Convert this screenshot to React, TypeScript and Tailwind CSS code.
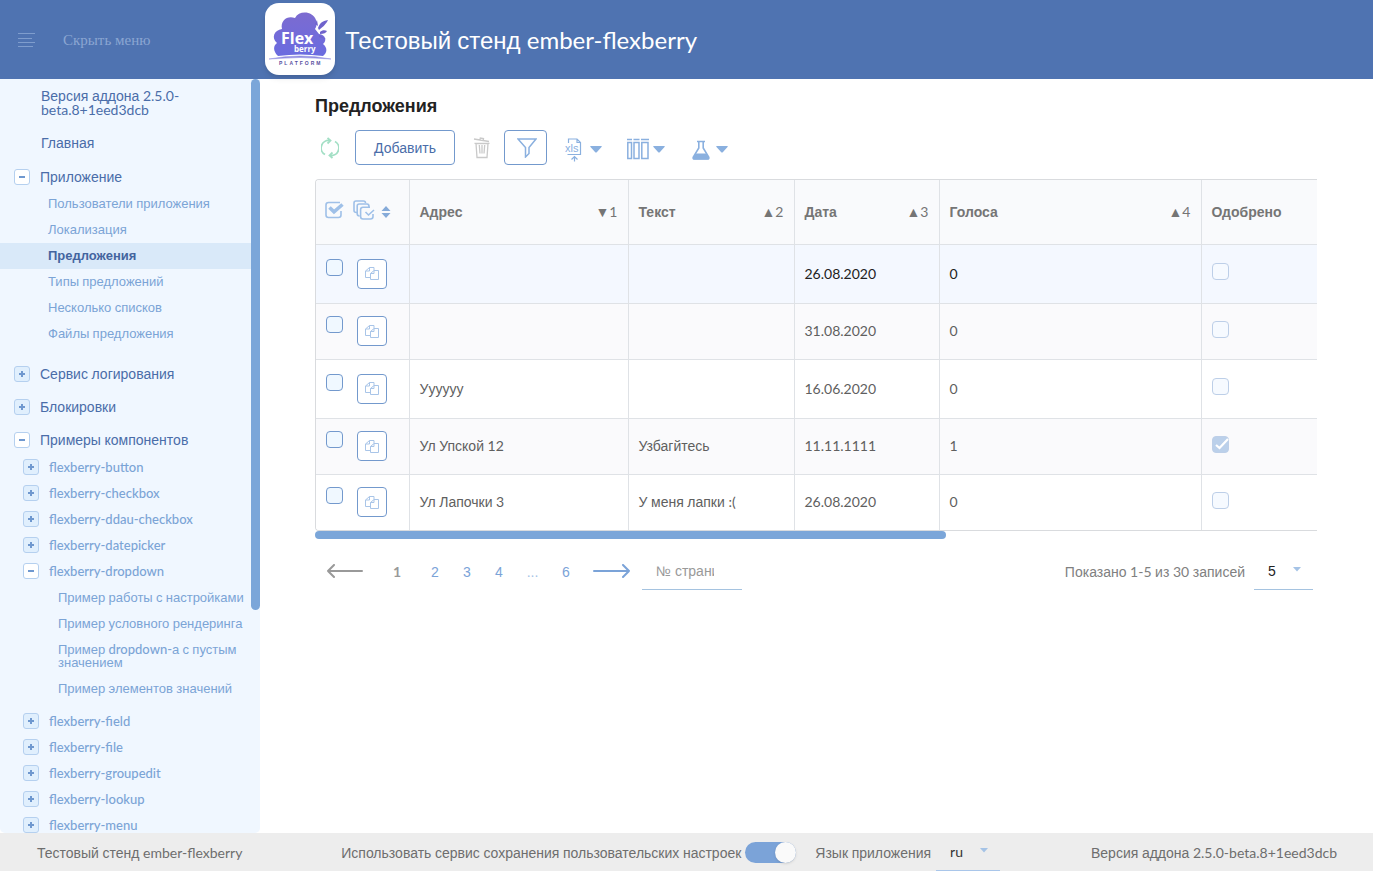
import React from 'react';

type Leaf = { label: string; active?: boolean };
type Node = { label: string; open?: boolean; children?: Leaf[] };

const appLinks: Leaf[] = [
  { label: 'Пользователи приложения' },
  { label: 'Локализация' },
  { label: 'Предложения', active: true },
  { label: 'Типы предложений' },
  { label: 'Несколько списков' },
  { label: 'Файлы предложения' },
];

const components: Node[] = [
  { label: 'flexberry-button' },
  { label: 'flexberry-checkbox' },
  { label: 'flexberry-ddau-checkbox' },
  { label: 'flexberry-datepicker' },
  {
    label: 'flexberry-dropdown',
    open: true,
    children: [
      { label: 'Пример работы с настройками' },
      { label: 'Пример условного рендеринга' },
      { label: 'Пример dropdown-а с пустым значением' },
      { label: 'Пример элементов значений' },
    ],
  },
  { label: 'flexberry-field' },
  { label: 'flexberry-file' },
  { label: 'flexberry-groupedit' },
  { label: 'flexberry-lookup' },
  { label: 'flexberry-menu' },
];

const rows = [
  { address: '', text: '', date: '26.08.2020', votes: 0, approved: false, tall: true },
  { address: '', text: '', date: '31.08.2020', votes: 0, approved: false, tall: false },
  { address: 'Уууууу', text: '', date: '16.06.2020', votes: 0, approved: false, tall: true },
  { address: 'Ул Упской 12', text: 'Узбагйтесь', date: '11.11.1111', votes: 1, approved: true, tall: false },
  { address: 'Ул Лапочки 3', text: 'У меня лапки :(', date: '26.08.2020', votes: 0, approved: false, tall: false },
];

/* Latin letters, digits and spaces use Lato; Cyrillic words use Liberation Sans. */
function T({ children }: { children: string }) {
  return (
    <>
      {children.split(/([А-Яа-яЁё№]+)/).map((part, i) =>
        i % 2 ? (
          <span key={i} className="font-['Liberation_Sans',sans-serif]">{part}</span>
        ) : (
          part
        ),
      )}
    </>
  );
}

function Expander({ open, label }: { open?: boolean; label: string }) {
  return (
    <button
      type="button"
      aria-label={label}
      aria-expanded={!!open}
      className={`flex size-4 shrink-0 items-center justify-center rounded-[3px] border border-[#b5d0ef] ${open ? 'bg-white' : 'bg-[#e0effd]'}`}
    >
      <svg viewBox="0 0 6 6" className="size-[6px]" stroke="#6f98cf" strokeWidth="2">
        <path d="M0 3H6" />
        {!open && <path d="M3 0V6" />}
      </svg>
    </button>
  );
}

function SectionTitle({ label, open }: { label: string; open?: boolean }) {
  return (
    <div className={`flex items-center gap-[10px] pl-[14px] pt-[9px] ${open ? 'pb-[6px]' : 'pb-2'}`}>
      <Expander open={open} label={label} />
      <a href="#" className="text-sm leading-4 text-[#4a6da9]"><T>{label}</T></a>
    </div>
  );
}

function Sidebar() {
  return (
    <aside className="flex w-[260px] shrink-0 overflow-hidden rounded-b-[5px] bg-[#f0f7ff]">
      <nav className="min-w-0 flex-1">
        <a href="#" className="block pb-[9px] pl-[41px] pr-16 pt-[10px] text-sm leading-[14px] text-[#4a6da9]">
          <T>Версия аддона 2.5.0-beta.8+1eed3dcb</T>
        </a>
        <a href="#" className="block py-[10px] pl-[41px] text-sm leading-[14px] text-[#4a6da9]"><T>Главная</T></a>
        <SectionTitle label="Приложение" open />
        <ul className="pb-[10px]">
          {appLinks.map((l) => (
            <li key={l.label} className={l.active ? 'bg-[#d9e9f9]' : ''}>
              <a
                href="#"
                className={`block pb-[7px] pl-12 pt-[6px] text-[13px] leading-[13px] ${l.active ? 'font-bold text-[#43649f]' : 'font-medium text-[#7ba4d6]'}`}
              >
                <T>{l.label}</T>
              </a>
            </li>
          ))}
        </ul>
        <SectionTitle label="Сервис логирования" />
        <SectionTitle label="Блокировки" />
        <SectionTitle label="Примеры компонентов" open />
        <ul>
          {components.map((c) => (
            <li key={c.label}>
              <div className="flex h-[26px] items-center gap-[10px] pl-[23px]">
                <Expander open={c.open} label={c.label} />
                <a href="#" className="text-[13px] leading-[13px] font-medium text-[#7ba4d6]">{c.label}</a>
              </div>
              {c.children && (
                <ul className="pb-[6px] pt-px">
                  {c.children.map((s) => (
                    <li key={s.label}>
                      <a href="#" className="block pb-[7px] pl-[58px] pt-[6px] text-[13px] leading-[13px] font-medium text-[#7ba4d6]">
                        <T>{s.label}</T>
                      </a>
                    </li>
                  ))}
                </ul>
              )}
            </li>
          ))}
        </ul>
      </nav>
      <div className="h-[70.4%] w-[9px] rounded-full bg-[#7ba6d9]" />
    </aside>
  );
}

function Logo() {
  return (
    <div className="mb-[2px] flex h-[72px] w-[70px] items-center justify-center rounded-[14px] bg-white shadow-md">
      <svg viewBox="0 0 70 72" className="h-[72px] w-[70px]" role="img" aria-label="Flexberry Platform">
        <defs>
          <linearGradient id="berry" x1="0" y1="0" x2="0" y2="1">
            <stop offset="0" stopColor="#7c6bd0" />
            <stop offset="1" stopColor="#6a6be0" />
          </linearGradient>
        </defs>
        <path
          fill="url(#berry)"
          d="M13 53C8 48 8 43 12 40C6 35 9 27 17 26C15 17 23 12 30 15C34 7 48 8 51 17C52 20 52 23 50 26L54 31C61 32 62 38 58 41C63 45 62 50 58 53Q35 50 13 53Z"
        />
        <path fill="#6f63cc" d="M53 25C55 20 57 18 63 17C61 21 59 23 54 27ZM55 29C57 27 60 27 62 28C61 30 59 31 55 31ZM54 32L61 36L54 34ZM50 21L52 17L53 23Z" />
        <path d="M4 56Q35 50 66 56Q35 53 4 56Z" fill="#8f8be0" stroke="#8f8be0" strokeWidth=".5" />
        <text x="16" y="41" fill="#fff" fontFamily="Open Sans, sans-serif" fontWeight="700" fontSize="16">Flex</text>
        <text x="29" y="49" fill="#fff" fontFamily="Open Sans, sans-serif" fontWeight="700" fontSize="8">berry</text>
        <text x="14" y="62" fill="#57509f" fontFamily="Liberation Sans, sans-serif" fontWeight="700" fontSize="5" letterSpacing="2">PLATFORM</text>
      </svg>
    </div>
  );
}

function Caret() {
  return (
    <svg viewBox="0 0 12 7" className="h-[7px] w-3" fill="#8ab0df">
      <path d="M1 0H11Q12.500 0 11.500 1L7 6Q6 7 5 6L.5 1Q-.5 0 1 0Z" />
    </svg>
  );
}

function Toolbar() {
  return (
    <div className="flex h-[35px] items-center">
      <button type="button" aria-label="Обновить" className="flex w-[30px] justify-center">
        <svg viewBox="0 0 18 22" className="h-[22px] w-[18px]" fill="none" stroke="#a3dfc5" strokeWidth="1.800">
          <path d="M4 17.500A7.500 7.500 0 0 1 8.500 3.500M6.500 1L9.500 3.600L6.500 6.500M14 4.500A7.500 7.500 0 0 1 9.500 18.500M11.500 21L8.500 18.400L11.500 15.500" />
        </svg>
      </button>
      <button type="button" className="ml-[10px] h-[35px] w-[100px] rounded-[4px] border border-[#7399cd] bg-white text-sm text-[#4a6da9]">
        <T>Добавить</T>
      </button>
      <button type="button" aria-label="Удалить" className="ml-[18px] flex w-[18px] justify-center">
        <svg viewBox="0 0 18 22" className="h-[22px] w-[18px]" fill="none" stroke="#c9c9c9" strokeWidth="1.300">
          <path d="M1 2L16 4.500M7 2.800L7.300 1L10.500 1.500L10.300 3.500M3 6.500H15L14 20.500H4ZM1.500 6.300H16.500M6.300 8L7 16.500M9 8V16.500M11.700 8L11 16.500" />
        </svg>
      </button>
      <button type="button" aria-label="Фильтр" className="ml-[13px] flex h-[35px] w-[43px] items-center justify-center rounded-[4px] border border-[#7399cd] bg-white pl-[2px]">
        <svg viewBox="0 0 20 20" className="size-5" fill="none" stroke="#8ab0df" strokeWidth="1.500">
          <path d="M1 1H19L12 9.500V15.500L8.500 19V9.500Z" />
        </svg>
      </button>
      <button type="button" aria-label="Экспорт" className="ml-[18px] flex items-center gap-[7px] pt-1">
        <svg viewBox="0 0 18 24" className="h-6 w-[18px]" fill="none" stroke="#8ab0df" strokeWidth="1.200">
          <path d="M3.500 5V1H12L15.500 4.500V16.500H2.500M12 1V4.500H15.500M9.500 23.500V18.500M6.500 21.500L9.500 18.500L12.500 21.500" />
          <text x="0" y="13.500" fontSize="11" fill="#8ab0df" stroke="none" fontFamily="Liberation Sans, sans-serif">xls</text>
        </svg>
        <Caret />
      </button>
      <button type="button" aria-label="Колонки" className="ml-[25px] flex items-center gap-1 pt-[3px]">
        <svg viewBox="0 0 22 22" className="size-[22px]" fill="none" stroke="#8ab0df" strokeWidth="1.500">
          <path d="M0 1.500H5M6.500 1.500H12.500M14 1.500H22M.8 4.500H4.500V20.500H.8ZM7 4.500H12V20.500H7ZM14.800 4.500H21V20.500H14.800Z" />
        </svg>
        <Caret />
      </button>
      <button type="button" aria-label="Эксперименты" className="ml-[27px] flex items-center gap-[6px] pt-1">
        <svg viewBox="0 0 18 20" className="h-5 w-[18px]" fill="none" stroke="#8ab0df" strokeWidth="1.600">
          <path d="M5 1.500H13M6.800 1.500V8L1.300 17Q.6 19 2.500 19H15.500Q17.400 19 16.700 17L11.200 8V1.500" />
          <path d="M3.500 13.500H14.500L17 17.500Q17 19.500 15.500 19.500H2.500Q.8 19.500 1 17.500Z" fill="#8ab0df" stroke="none" />
        </svg>
        <Caret />
      </button>
    </div>
  );
}

function HeadCell({ label, sort }: { label: string; sort?: string }) {
  return (
    <th scope="col" className="border-r border-[#dfe2e6] px-[10px] text-left font-bold">
      <div className="flex items-center justify-between">
        <span><T>{label}</T></span>
        {sort && <span className="font-normal">{sort}</span>}
      </div>
    </th>
  );
}

function OffersTable() {
  return (
    <div>
      <div className="overflow-hidden rounded-l-[4px] border-y border-l border-[#d9dbde]">
        <table className="w-[1589px] table-fixed border-collapse text-sm text-[#5f5f5f]">
          <colgroup>
            <col className="w-[93px]" />
            <col className="w-[219px]" />
            <col className="w-[166px]" />
            <col className="w-[145px]" />
            <col className="w-[262px]" />
            <col />
          </colgroup>
          <thead>
            <tr className="h-16 border-b border-[#dfe2e6] bg-[#f9fafc] text-[#757575]">
              <th className="border-r border-[#dfe2e6] pb-1 pl-[9px]">
                <div className="flex items-center">
                  <button type="button" aria-label="Отметить все">
                    <svg viewBox="0 0 20 18" className="h-[18px] w-5" fill="none" stroke="#9fc0e8">
                      <path d="M15 1.500H3.500Q1 1.500 1 4V14Q1 16.500 3.500 16.500H13.500Q16 16.500 16 14V10" strokeWidth="1.600" />
                      <path d="M4.500 6.500L9 10.800L17.500 3.500" strokeWidth="3.600" />
                    </svg>
                  </button>
                  <button type="button" aria-label="Отметить страницы" className="ml-2">
                    <svg viewBox="0 0 22 20" className="h-5 w-[22px]" fill="none" stroke="#9fc0e8" strokeWidth="1.600">
                      <path d="M3.500 12.500Q1 12.500 1 10.500V3Q1 1 3 1H10.500Q12.500 1 12.500 3M6.500 16Q4.200 16 4.200 13.500V6Q4.200 4 6.200 4H14Q16 4 16 6.500M20 14V16.500Q20 19 17.500 19H10Q7.600 19 7.600 16.500V9.500Q7.600 7.200 10 7.200H17" />
                      <path d="M12.500 12L15.500 15L21 10" />
                    </svg>
                  </button>
                  <button type="button" aria-label="Сортировка" className="ml-[6px] pt-1">
                    <svg viewBox="0 0 10 12" className="h-3 w-[10px]" fill="#86abd9">
                      <path d="M5 0L9.500 5H.5ZM5 12L9.500 7H.5Z" />
                    </svg>
                  </button>
                </div>
              </th>
              <HeadCell label="Адрес" sort="▼1" />
              <HeadCell label="Текст" sort="▲2" />
              <HeadCell label="Дата" sort="▲3" />
              <HeadCell label="Голоса" sort="▲4" />
              <HeadCell label="Одобрено" />
            </tr>
          </thead>
          <tbody>
            {rows.map((r, i) => (
              <tr
                key={i}
                className={`border-b border-[#dfe2e6] last:border-b-0 ${r.tall ? 'h-[59px]' : 'h-14'} ${i === 0 ? 'bg-[#f4f8ff] text-[#222]' : i % 2 ? 'bg-[#fafafc]' : 'bg-white'}`}
              >
                <td className="border-r border-[#dfe2e6] pl-[10px]">
                  <div className="flex items-start gap-[14px]">
                    <input type="checkbox" aria-label={`Выбрать строку ${i + 1}`} className="size-[17px] appearance-none rounded-[4px] border border-[#7399cd] bg-[#f0f8ff]" />
                    <button type="button" aria-label="Копировать" className="flex size-[30px] items-center justify-center rounded-[4px] border border-[#7399cd] bg-white">
                      <svg viewBox="0 0 16 15" className="h-[15px] w-4" fill="none" stroke="#a9c5e8">
                        <path d="M6.500 11.500H1.500V5L5.500 1.500H10V4M5.500 1.500V5H1.500M6.500 13.500V7.500L10 4.500H14.500V13.500ZM10 4.500V7.500H6.500" />
                      </svg>
                    </button>
                  </div>
                </td>
                <td className="border-r border-[#dfe2e6] px-[10px]"><T>{r.address}</T></td>
                <td className="border-r border-[#dfe2e6] px-[10px]"><T>{r.text}</T></td>
                <td className="border-r border-[#dfe2e6] px-[10px]">{r.date}</td>
                <td className="border-r border-[#dfe2e6] px-[10px]">{r.votes}</td>
                <td className="px-[10px] pb-1">
                  <span className="relative block size-[17px]">
                    <input
                      type="checkbox"
                      aria-label="Одобрено"
                      defaultChecked={r.approved}
                      disabled
                      className="block size-[17px] appearance-none rounded-[4px] border border-[#bdcfe8] bg-[#f6faff] checked:bg-[#bbd0ea]"
                    />
                    {r.approved && (
                      <svg viewBox="0 0 17 17" className="absolute inset-0 size-[17px]" fill="none" stroke="#fff" strokeWidth="2.200">
                        <path d="M4 9L7.500 12L16 3" />
                      </svg>
                    )}
                  </span>
                </td>
              </tr>
            ))}
          </tbody>
        </table>
      </div>
      <div className="h-2 w-[63%] rounded-full bg-[#7ba6d9]" />
    </div>
  );
}

function SmallCaret() {
  return (
    <svg viewBox="0 0 8 5" className="pointer-events-none absolute right-3 top-[14px] h-[5px] w-2" fill="#a5c3e6">
      <path d="M0 0H8L4 4.500Z" />
    </svg>
  );
}

function Pagination() {
  const page = "w-8 text-center text-[#7ba3d8]";
  return (
    <div className="mt-[14px] flex items-center justify-between">
      <div className="flex items-center font-['Liberation_Sans',sans-serif] text-sm">
        <button type="button" aria-label="Назад" className="ml-[11px]">
          <svg viewBox="0 0 38 16" className="h-4 w-[38px]" fill="none" stroke="#999" strokeWidth="2" strokeLinecap="round" strokeLinejoin="round">
            <path d="M36 7H2M8 1L2 7L8 13" />
          </svg>
        </button>
        <button type="button" className="ml-[17px] w-8 text-center font-['Lato',sans-serif] font-bold text-[#999]">1</button>
        <button type="button" className={`ml-[6px] ${page}`}>2</button>
        <button type="button" className={page}>3</button>
        <button type="button" className={page}>4</button>
        <span className="w-[35px] text-center text-[#a5c3e6]">...</span>
        <button type="button" className={page}>6</button>
        <button type="button" aria-label="Вперёд" className="ml-[11px]">
          <svg viewBox="0 0 38 16" className="h-4 w-[38px]" fill="none" stroke="#7ba3d8" strokeWidth="2" strokeLinecap="round" strokeLinejoin="round">
            <path d="M1 7H36M30 1L36 7L30 13" />
          </svg>
        </button>
        <input
          type="text"
          aria-label="Номер страницы"
          placeholder="№ страницы"
          className="ml-[11px] h-[37px] w-[100px] border-b border-[#a5c3e0] px-[14px] pr-7 text-sm outline-none placeholder:text-[#999]"
        />
      </div>
      <div className="mr-1 flex items-center gap-[9px] text-sm">
        <label htmlFor="per-page" className="text-[#808080]"><T>Показано 1-5 из 30 записей</T></label>
        <div className="relative">
          <select id="per-page" className="h-[37px] w-[59px] appearance-none border-b border-[#a5c3e0] pl-[14px] font-['Liberation_Sans',sans-serif] text-sm text-[#222]">
            <option>5</option>
          </select>
          <SmallCaret />
        </div>
      </div>
    </div>
  );
}

export default function App() {
  return (
    <div className="flex h-screen flex-col overflow-hidden bg-white font-['Lato','Liberation_Sans',sans-serif]">
      <header className="flex h-[79px] shrink-0 items-center bg-[#4f73b1]">
        <button type="button" className="flex w-[265px] items-center gap-[27px] pl-[18px] text-[#8ba6d2]">
          <svg viewBox="0 0 18 16" className="h-4 w-[18px]" stroke="#7f9dcd" strokeWidth="1">
            <path d="M0 1.500H17M0 6.500H14M0 10.500H17M0 14.500H15" />
          </svg>
          <span className="pt-[2px] font-['Liberation_Serif',serif] text-[15px]">Скрыть меню</span>
        </button>
        <Logo />
        <h1 className="ml-[10px] pt-[2px] text-2xl text-white"><T>Тестовый стенд ember-flexberry</T></h1>
      </header>
      <div className="flex min-h-0 flex-1">
        <Sidebar />
        <main className="min-w-0 flex-1 pl-[55px] pr-14 pt-[14px]">
          <h2 className="mb-3 text-lg leading-6 font-bold text-[#222]"><T>Предложения</T></h2>
          <Toolbar />
          <div className="h-[14px]" />
          <OffersTable />
          <Pagination />
        </main>
      </div>
      <footer className="flex h-[38px] shrink-0 items-center justify-between bg-[#ededed] pl-[37px] pr-9 pt-px text-sm text-[#6e6e6e]">
        <span><T>Тестовый стенд ember-flexberry</T></span>
        <div className="flex items-center pl-2">
          <label htmlFor="settings" className="mr-1"><T>Использовать сервис сохранения пользовательских настроек</T></label>
          <span className="relative flex">
            <input id="settings" type="checkbox" role="switch" defaultChecked className="h-[21px] w-[51px] appearance-none rounded-full bg-[#b9b9b9] checked:bg-[#7ba3d8]" />
            <span className="pointer-events-none absolute right-0 top-0 size-[21px] rounded-full bg-[#fafafa] shadow" />
          </span>
          <label htmlFor="lang" className="ml-[19px] mr-[5px]"><T>Язык приложения</T></label>
          <div className="relative">
            <select id="lang" className="h-[37px] w-16 appearance-none border-b border-[#a9c6ea] pl-[14px] text-sm text-[#333]">
              <option>ru</option>
            </select>
            <SmallCaret />
          </div>
        </div>
        <span><T>Версия аддона 2.5.0-beta.8+1eed3dcb</T></span>
      </footer>
    </div>
  );
}
